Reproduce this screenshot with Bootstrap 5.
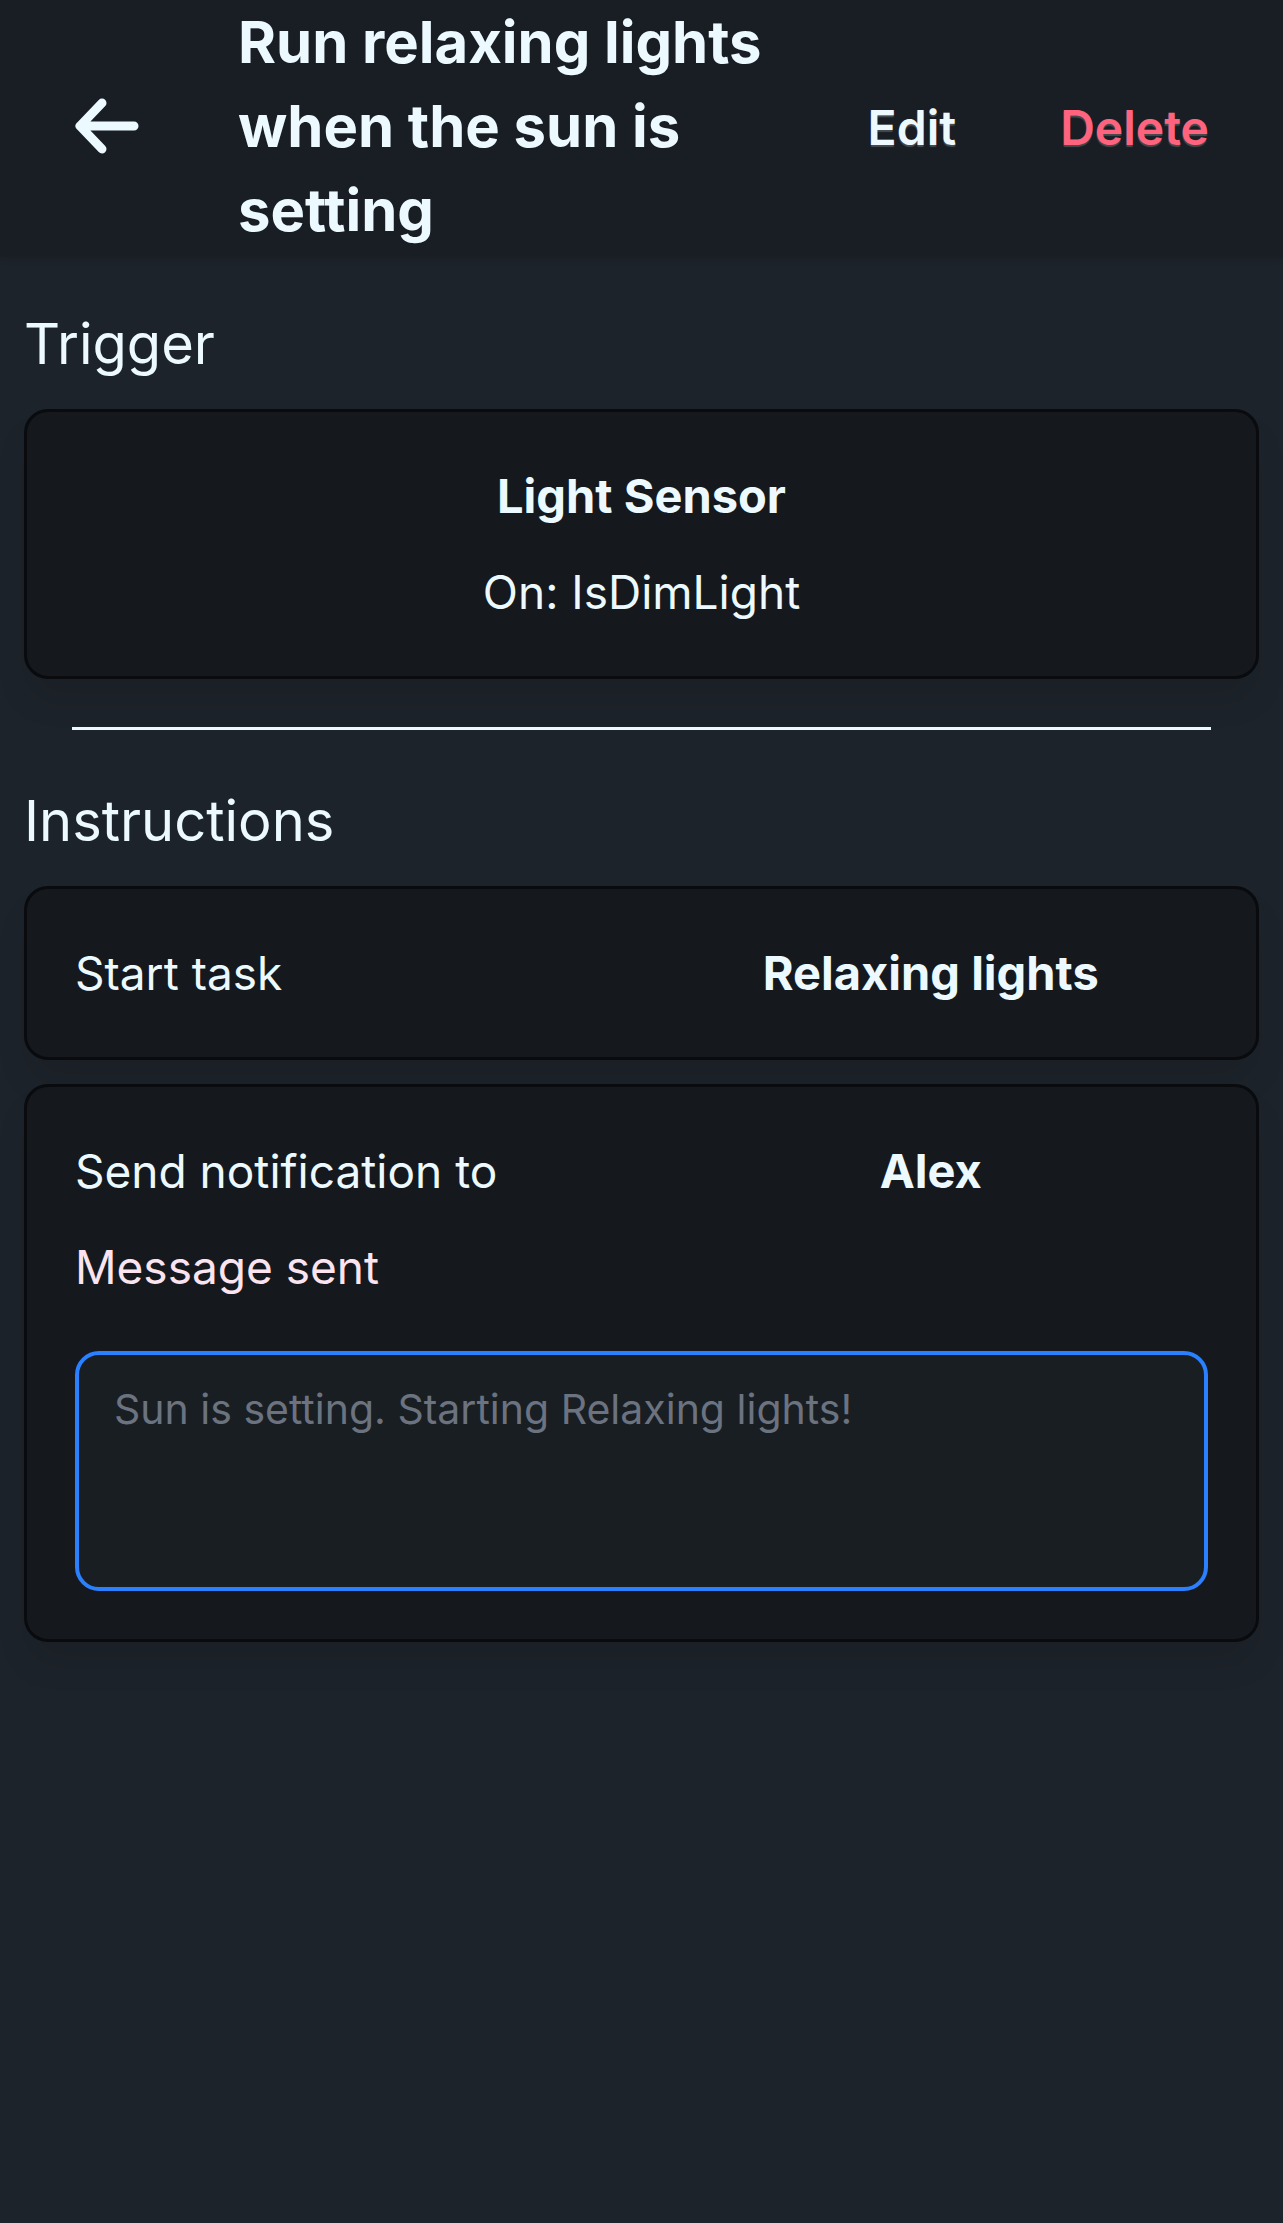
<!DOCTYPE html>
<html lang="en">
<head>
<meta charset="utf-8">
<meta name="viewport" content="width=device-width, initial-scale=1">
<title>Run relaxing lights when the sun is setting</title>
<link href="https://cdn.jsdelivr.net/npm/bootstrap@5.3.0/dist/css/bootstrap.min.css" rel="stylesheet">
<style>
body{background:#1d232a;color:#ecf9ff;font-family:Inter,"Liberation Sans",sans-serif;font-size:46px;line-height:72px;min-height:100vh}
.topbar{background:#191e24;padding:0 24px 5px;box-shadow:0 3px 6px #0000001a}
.topbar h1{font-size:58px;line-height:84px;font-weight:700;margin:0 0 0 98px;flex:0 1 546px}
.topbar .btn{color:#ecf9ff;font-size:48px;line-height:72px;font-weight:600;padding:0;border:0}
.topbar .actions .btn{text-shadow:0 2px 1px #ffffff33}
.topbar .btn.del{color:#ff637d}
.back{margin-left:50px}
.back svg{display:block}
.actions{gap:104px;padding:4px 50px 0 0}
main{padding:48px 24px}
h2{font-size:56px;line-height:78px;font-weight:400;margin:0 0 26px}
.panel{background:#15191e;border:3px solid #090b0e;border-radius:24px;padding:48px;box-shadow:0 24px 36px -6px #0000001a}
.panel strong{font-size:47px}
hr{border-top:3px solid #ecf9ff;opacity:1;margin:48px 48px 52px}
.panel p,.panel label{margin:0}
.pair{display:flex;gap:24px}
.pair>*{flex:1 1 0}
.msg{color:#fbe4ef}
textarea.form-control{background:#191e22;border:4px solid #2a80ff;border-radius:24px;color:#ecf9ff;font-size:41px;line-height:60px;padding:24px 35px;height:240px;resize:none;box-shadow:none}
textarea.form-control::placeholder{color:#6b7280;opacity:1}
textarea.form-control:focus{background:#191e22;color:#ecf9ff;border-color:#2a80ff}
</style>
</head>
<body>
<header class="topbar d-flex align-items-center">
<button class="btn back" aria-label="Back"><svg width="66" height="60" viewBox="0 0 66 60" fill="none" stroke="#ecf9ff" stroke-width="9" stroke-linecap="round" stroke-linejoin="round"><path d="M28 7 6 30l22 23M6 30h54"/></svg></button>
<h1>Run relaxing lights when the sun is setting</h1>
<div class="actions d-flex ms-auto"><button class="btn">Edit</button><button class="btn del">Delete</button></div>
</header>
<main>
<h2>Trigger</h2>
<section class="panel text-center d-flex flex-column gap-4"><strong>Light Sensor</strong><p>On: IsDimLight</p></section>
<hr>
<h2>Instructions</h2>
<section class="panel pair"><p>Start task</p><strong class="text-center">Relaxing lights</strong></section>
<section class="panel mt-4"><div class="pair"><p>Send notification to</p><strong class="text-center">Alex</strong></div>
<label class="msg mt-4" for="message">Message sent</label>
<textarea class="form-control mt-5" id="message" placeholder="Sun is setting. Starting Relaxing lights!"></textarea></section>
</main>
<script src="https://cdn.jsdelivr.net/npm/bootstrap@5.3.0/dist/js/bootstrap.bundle.min.js"></script>
</body>
</html>
